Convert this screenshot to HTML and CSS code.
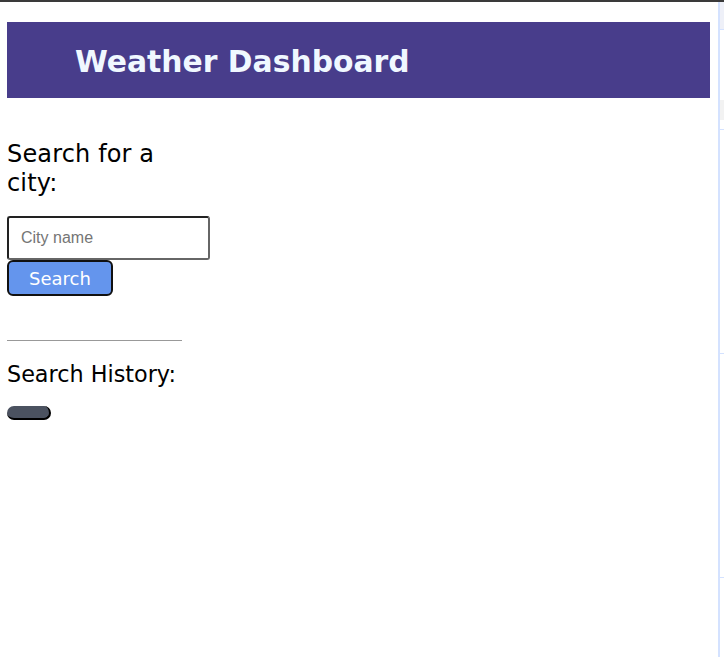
FILE: index.html
```html
<!DOCTYPE html>
<html lang="en">
<head>
<meta charset="utf-8">
<title>Weather Dashboard</title>
<link rel="stylesheet" href="styles.css">
</head>
<body>
<div class="page">
  <div class="main">
    <header class="header">
      <h1 class="title">Weather Dashboard</h1>
    </header>
    <aside class="sidebar">
      <h2 class="label">Search for a city:</h2>
      <input class="city-input" type="text" placeholder="City name">
      <button class="search-btn" type="button">Search</button>
      <hr class="divider">
      <h2 class="label history-label">Search History:</h2>
      <button class="history-btn" type="button"></button>
    </aside>
  </div>
  <div class="strip">
    <div class="strip-top"></div>
    <div class="strip-gap"></div>
    <div class="strip-grey"></div>
    <div class="strip-sec"></div>
    <div class="strip-sec"></div>
    <div class="strip-sec last"></div>
  </div>
</div>
</body>
</html>
```
FILE: styles.css
```css
html, body {
  margin: 0;
  padding: 0;
  height: 100%;
}
body {
  font-family: "DejaVu Sans", Verdana, sans-serif;
  background: #fff;
  border-top: 2px solid #3a3a3a;
  box-sizing: border-box;
  overflow: hidden;
}
.page {
  display: flex;
  height: 100%;
}
.main {
  width: 703px;
  padding: 20px 0 0 7px;
  flex: none;
}
.header {
  background: #483d8b;
  height: 76px;
  display: flex;
  align-items: center;
  padding-left: 68px;
  box-sizing: border-box;
}
.title {
  margin: 0;
  color: #f0f8ff;
  font-size: 29.8px;
  font-weight: bold;
  line-height: 1;
  padding-top: 3px;
}
.sidebar {
  width: 175px;
  display: flex;
  flex-direction: column;
  align-items: flex-start;
  padding-top: 42px;
}
.label {
  margin: 0;
  font-size: 24px;
  letter-spacing: 0.15px;
  font-weight: normal;
  line-height: 29px;
  color: #000;
}
.city-input {
  margin-top: 18px;
  width: 203px;
  height: 44px;
  box-sizing: border-box;
  border: 2px solid #222;
  border-right-color: #666;
  border-bottom-color: #666;
  border-radius: 3px;
  padding: 0 12px;
  font-family: "Liberation Sans", Arial, sans-serif;
  font-size: 16px;
  color: #000;
}
.city-input::placeholder {
  color: #757575;
}
.search-btn {
  width: 106px;
  height: 36px;
  background: #6495ed;
  border: 2px solid #111;
  border-radius: 6px;
  color: #fff;
  font-family: "DejaVu Sans", Verdana, sans-serif;
  font-size: 18px;
  padding: 0;
}
.divider {
  margin: 44px 0 0 0;
  width: 175px;
  border: none;
  border-top: 1px solid #999;
  height: 0;
}
.history-label {
  margin-top: 19px;
  font-size: 22.3px;
  letter-spacing: 0;
  white-space: nowrap;
}
.history-btn {
  margin-top: 17px;
  width: 44px;
  height: 14px;
  background: #4b5260;
  border: none;
  border-bottom: 2px solid #000;
  border-right: 2px solid #000;
  border-radius: 7px;
  padding: 0;
}
.strip {
  flex: 1;
  margin-left: 8px;
  border-left: 2px solid #d4e2ff;
  display: flex;
  flex-direction: column;
}
.strip-top {
  height: 27px;
  background: #eef0f8;
  border-bottom: 1px solid #d4e2ff;
}
.strip-gap {
  height: 70px;
}
.strip-grey {
  height: 20px;
  background: #f2f2f2;
}
.strip-sec {
  height: 223px;
  border-top: 1px solid #d4e2ff;
  margin-top: 9px;
}
.strip-sec + .strip-sec {
  margin-top: 0;
}
.strip-sec.last {
  height: auto;
  flex: 1;
}
```
